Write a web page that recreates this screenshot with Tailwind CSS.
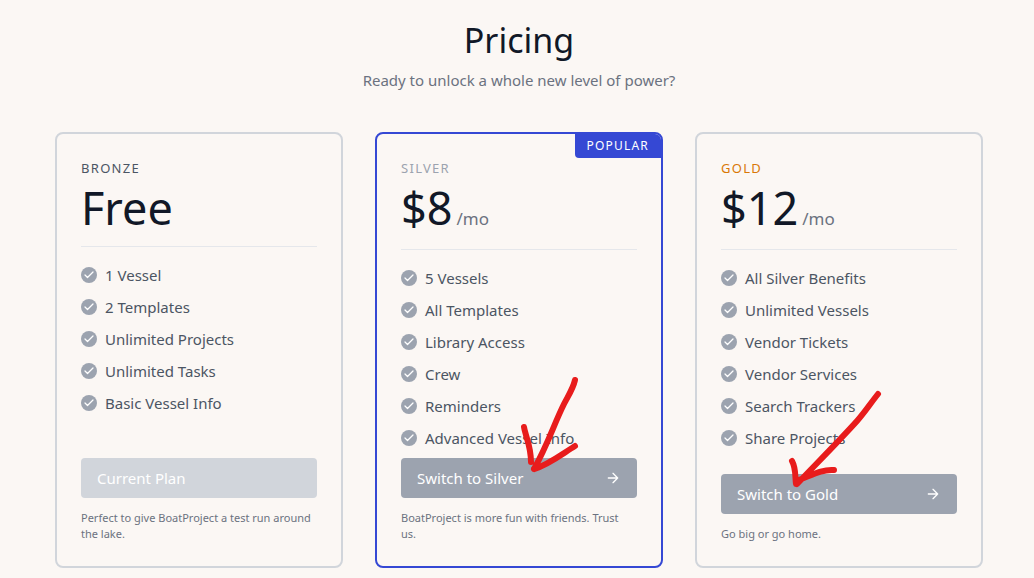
<!DOCTYPE html>
<html lang="en">
<head>
    <meta charset="UTF-8">
    <meta name="viewport" content="width=device-width, initial-scale=1.0">
    <title>BoatProject - Pricing</title>
    <script src="https://cdn.jsdelivr.net/npm/@tailwindcss/browser@4"></script>
</head>

<body class="min-h-screen bg-[#fbf7f4] font-['Noto_Sans','Open_Sans',sans-serif] text-[15px] leading-6 text-[#4b5563]">

    <!-- Shared icons -->
    <svg class="hidden">
        <symbol id="check" viewBox="0 0 24 24" fill="none" stroke="currentColor" stroke-width="2.5" stroke-linecap="round" stroke-linejoin="round">
            <path d="M20 6L9 17l-5-5"></path>
        </symbol>
        <symbol id="arrow" viewBox="0 0 24 24" fill="none" stroke="currentColor" stroke-width="2" stroke-linecap="round" stroke-linejoin="round">
            <path d="M5 12h14M12 5l7 7-7 7"></path>
        </symbol>
    </svg>

    <section class="pt-5 pb-2 pl-5 pr-4">
        <div class="text-center mb-10">
            <h1 class="text-[34px] leading-10 text-[#111827] mb-2">Pricing</h1>
            <p class="text-[#6b7280]">Ready to unlock a whole new level of power?</p>
        </div>

        <div class="grid grid-cols-3 gap-8 max-w-[928px] mx-auto">

            <!-- Bronze -->
            <div class="relative flex flex-col p-6 rounded-lg border-2 border-[#d1d5db] overflow-hidden">
                <h2 class="text-[13px] leading-5 tracking-widest mb-1">BRONZE</h2>
                <p class="text-[45px] leading-[52px] text-[#111827] pb-3 mb-4 border-b border-[#e5e7eb]">Free</p>
                <ul>
                    <li class="flex items-center mb-2"><span class="w-4 h-4 mr-2 inline-flex items-center justify-center bg-[#9ca3af] text-white rounded-full shrink-0"><svg class="w-3 h-3"><use href="#check"></use></svg></span>1 Vessel</li>
                    <li class="flex items-center mb-2"><span class="w-4 h-4 mr-2 inline-flex items-center justify-center bg-[#9ca3af] text-white rounded-full shrink-0"><svg class="w-3 h-3"><use href="#check"></use></svg></span>2 Templates</li>
                    <li class="flex items-center mb-2"><span class="w-4 h-4 mr-2 inline-flex items-center justify-center bg-[#9ca3af] text-white rounded-full shrink-0"><svg class="w-3 h-3"><use href="#check"></use></svg></span>Unlimited Projects</li>
                    <li class="flex items-center mb-2"><span class="w-4 h-4 mr-2 inline-flex items-center justify-center bg-[#9ca3af] text-white rounded-full shrink-0"><svg class="w-3 h-3"><use href="#check"></use></svg></span>Unlimited Tasks</li>
                    <li class="flex items-center mb-2"><span class="w-4 h-4 mr-2 inline-flex items-center justify-center bg-[#9ca3af] text-white rounded-full shrink-0"><svg class="w-3 h-3"><use href="#check"></use></svg></span>Basic Vessel Info</li>
                </ul>
                <button type="button" disabled class="flex items-center mt-auto w-full py-2 px-4 bg-[#d1d5db] text-white rounded">Current Plan</button>
                <p class="text-[11px] leading-4 text-[#6b7280] mt-3">Perfect to give BoatProject a test run around the lake.</p>
            </div>

            <!-- Silver -->
            <div class="relative flex flex-col p-6 rounded-lg border-2 border-[#3548d4] overflow-hidden">
                <span class="absolute top-0 right-0 bg-[#3548d4] text-white text-xs tracking-widest px-3 py-1 rounded-bl">POPULAR</span>
                <h2 class="text-[13px] leading-5 tracking-widest text-[#9ca3af] mb-1">SILVER</h2>
                <p class="text-[45px] leading-[52px] text-[#111827] pb-[15px] mb-4 border-b border-[#e5e7eb] flex items-baseline">$8<span class="text-[17px] leading-4 text-[#6b7280] ml-1">/mo</span></p>
                <ul>
                    <li class="flex items-center mb-2"><span class="w-4 h-4 mr-2 inline-flex items-center justify-center bg-[#9ca3af] text-white rounded-full shrink-0"><svg class="w-3 h-3"><use href="#check"></use></svg></span>5 Vessels</li>
                    <li class="flex items-center mb-2"><span class="w-4 h-4 mr-2 inline-flex items-center justify-center bg-[#9ca3af] text-white rounded-full shrink-0"><svg class="w-3 h-3"><use href="#check"></use></svg></span>All Templates</li>
                    <li class="flex items-center mb-2"><span class="w-4 h-4 mr-2 inline-flex items-center justify-center bg-[#9ca3af] text-white rounded-full shrink-0"><svg class="w-3 h-3"><use href="#check"></use></svg></span>Library Access</li>
                    <li class="flex items-center mb-2"><span class="w-4 h-4 mr-2 inline-flex items-center justify-center bg-[#9ca3af] text-white rounded-full shrink-0"><svg class="w-3 h-3"><use href="#check"></use></svg></span>Crew</li>
                    <li class="flex items-center mb-2"><span class="w-4 h-4 mr-2 inline-flex items-center justify-center bg-[#9ca3af] text-white rounded-full shrink-0"><svg class="w-3 h-3"><use href="#check"></use></svg></span>Reminders</li>
                    <li class="flex items-center mb-2"><span class="w-4 h-4 mr-2 inline-flex items-center justify-center bg-[#9ca3af] text-white rounded-full shrink-0"><svg class="w-3 h-3"><use href="#check"></use></svg></span>Advanced Vessel Info</li>
                </ul>
                <button type="button" class="flex items-center mt-auto w-full py-2 px-4 bg-[#9ca3af] hover:bg-[#6b7280] text-white rounded">Switch to Silver<svg class="w-4 h-4 ml-auto"><use href="#arrow"></use></svg></button>
                <p class="text-[11px] leading-4 text-[#6b7280] mt-3 pr-2">BoatProject is more fun with friends. Trust us.</p>

                <!-- Hand-drawn pointer to the button -->
                <svg class="absolute top-0 left-0 w-[284px] h-[432px] pointer-events-none" viewBox="377 134 284 432" fill="none" stroke="#e81c1c" stroke-width="6" stroke-linecap="round" stroke-linejoin="round" aria-hidden="true">
                    <path d="M575 380C573 389 568 396 564 404C554 424 548 444 534 469M524 427C526 438 531 446 531 462M575 446C562 454 548 465 534 469"></path>
                </svg>
            </div>

            <!-- Gold -->
            <div class="relative flex flex-col p-6 rounded-lg border-2 border-[#d1d5db] overflow-hidden">
                <h2 class="text-[13px] leading-5 tracking-widest text-[#d97706] mb-1">GOLD</h2>
                <p class="text-[45px] leading-[52px] text-[#111827] pb-[15px] mb-4 border-b border-[#e5e7eb] flex items-baseline">$12<span class="text-[17px] leading-4 text-[#6b7280] ml-1">/mo</span></p>
                <ul>
                    <li class="flex items-center mb-2"><span class="w-4 h-4 mr-2 inline-flex items-center justify-center bg-[#9ca3af] text-white rounded-full shrink-0"><svg class="w-3 h-3"><use href="#check"></use></svg></span>All Silver Benefits</li>
                    <li class="flex items-center mb-2"><span class="w-4 h-4 mr-2 inline-flex items-center justify-center bg-[#9ca3af] text-white rounded-full shrink-0"><svg class="w-3 h-3"><use href="#check"></use></svg></span>Unlimited Vessels</li>
                    <li class="flex items-center mb-2"><span class="w-4 h-4 mr-2 inline-flex items-center justify-center bg-[#9ca3af] text-white rounded-full shrink-0"><svg class="w-3 h-3"><use href="#check"></use></svg></span>Vendor Tickets</li>
                    <li class="flex items-center mb-2"><span class="w-4 h-4 mr-2 inline-flex items-center justify-center bg-[#9ca3af] text-white rounded-full shrink-0"><svg class="w-3 h-3"><use href="#check"></use></svg></span>Vendor Services</li>
                    <li class="flex items-center mb-2"><span class="w-4 h-4 mr-2 inline-flex items-center justify-center bg-[#9ca3af] text-white rounded-full shrink-0"><svg class="w-3 h-3"><use href="#check"></use></svg></span>Search Trackers</li>
                    <li class="flex items-center mb-2"><span class="w-4 h-4 mr-2 inline-flex items-center justify-center bg-[#9ca3af] text-white rounded-full shrink-0"><svg class="w-3 h-3"><use href="#check"></use></svg></span>Share Projects</li>
                </ul>
                <button type="button" class="flex items-center mt-auto w-full py-2 px-4 bg-[#9ca3af] hover:bg-[#6b7280] text-white rounded">Switch to Gold<svg class="w-4 h-4 ml-auto"><use href="#arrow"></use></svg></button>
                <p class="text-[11px] leading-4 text-[#6b7280] mt-3">Go big or go home.</p>

                <!-- Hand-drawn pointer to the button -->
                <svg class="absolute top-0 left-0 w-[284px] h-[432px] pointer-events-none" viewBox="697 134 284 432" fill="none" stroke="#e81c1c" stroke-width="6" stroke-linecap="round" stroke-linejoin="round" aria-hidden="true">
                    <path d="M878 394C870 404 865 412 857 421C839 441 818 462 797 484M792 461C796 468 795 476 796 484M834 470C822 469 812 475 799 480"></path>
                </svg>
            </div>

        </div>
    </section>

</body>
</html>
